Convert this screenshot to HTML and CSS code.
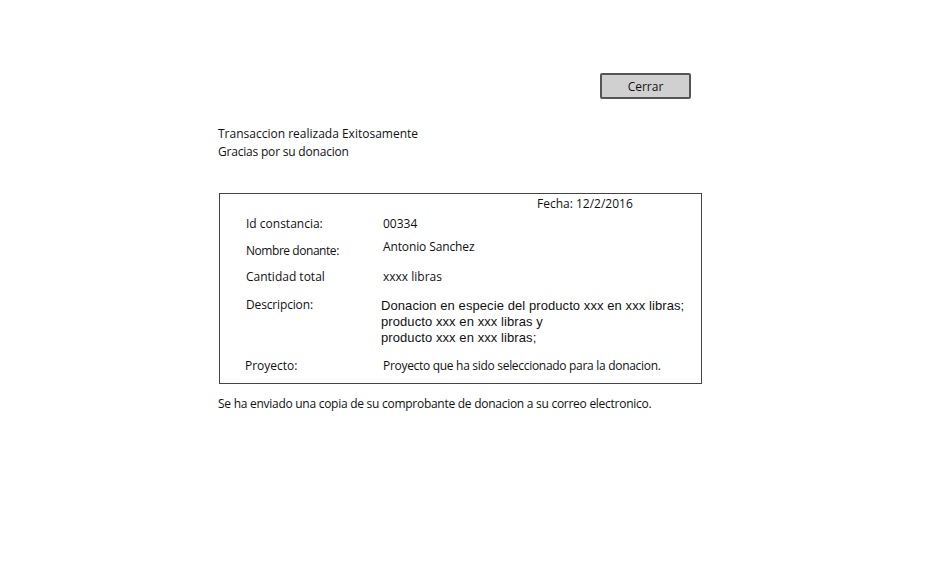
FILE: index.html
```html
<!DOCTYPE html>
<html lang="es">
<head>
<meta charset="utf-8">
<title>Transaccion</title>
<link rel="stylesheet" href="styles.css">
</head>
<body>
<div class="page">
  <div class="top-bar">
    <button class="btn">Cerrar</button>
  </div>
  <div class="msg">
    <div>Transaccion realizada Exitosamente</div>
    <div class="thanks">Gracias por su donacion</div>
  </div>
  <div class="card">
    <div class="fecha">Fecha: 12/2/2016</div>
    <div class="row r1"><span class="lbl">Id constancia:</span><span class="val">00334</span></div>
    <div class="row r2"><span class="lbl">Nombre donante:</span><span class="val">Antonio Sanchez</span></div>
    <div class="row r3"><span class="lbl">Cantidad total</span><span class="val">xxxx libras</span></div>
    <div class="row r4"><span class="lbl">Descripcion:</span><span class="val desc">Donacion en especie del producto xxx en xxx libras;<br>producto xxx en xxx libras y<br>producto xxx en xxx libras;</span></div>
    <div class="row r5"><span class="lbl">Proyecto:</span><span class="val proj">Proyecto que ha sido seleccionado para la donacion.</span></div>
  </div>
  <div class="note">Se ha enviado una copia de su comprobante de donacion a su correo electronico.</div>
</div>
</body>
</html>
```

FILE: styles.css
```css
html, body {
  margin: 0;
  padding: 0;
  background: #fff;
}
body {
  font-family: "Open Sans", "DejaVu Sans", sans-serif;
  font-size: 12px;
  color: #111;
}
.page {
  width: 949px;
  height: 575px;
  display: flex;
  flex-direction: column;
  padding-left: 218px;
  box-sizing: border-box;
}
.top-bar {
  display: flex;
  padding-top: 73px;
  padding-left: 382px;
}
.btn {
  width: 91px;
  height: 26px;
  background: #d0d0d0;
  border: 2px solid #555;
  border-radius: 2px;
  font-family: inherit;
  font-size: 12px;
  color: #111;
  padding: 0;
}
.msg {
  margin-top: 26px;
  line-height: 18px;
}
.thanks { letter-spacing: -0.2px; }
.card {
  margin-top: 32px;
  margin-left: 1px;
  width: 483px;
  height: 191px;
  box-sizing: border-box;
  border: 1px solid #444;
  padding-left: 26px;
  display: flex;
  flex-direction: column;
}
.fecha {
  margin-left: 291px;
  line-height: 18px;
  margin-top: 1px;
}
.row {
  display: flex;
  line-height: 18px;
}
.lbl {
  width: 137px;
  flex: none;
}
.r1 { margin-top: 2px; }
.r2 { margin-top: 5px; }
.r2 .lbl { position: relative; top: 4px; letter-spacing: -0.45px; }
.r2 .val { letter-spacing: -0.12px; }
.r3 { margin-top: 12px; }
.r4 { margin-top: 10px; }
.r4 .lbl { margin-right: -2px; letter-spacing: -0.15px; }
.desc {
  font-family: "Liberation Sans", Arial, sans-serif;
  font-size: 13px;
  letter-spacing: 0.08px;
  line-height: 16px;
  position: relative;
  top: 2px;
}
.r5 { margin-top: 13px; }
.r5 .lbl { margin-left: -1px; margin-right: 1px; }
.proj { letter-spacing: -0.3px; }
.note {
  margin-top: 11px;
  line-height: 18px;
  letter-spacing: -0.27px;
}
```
